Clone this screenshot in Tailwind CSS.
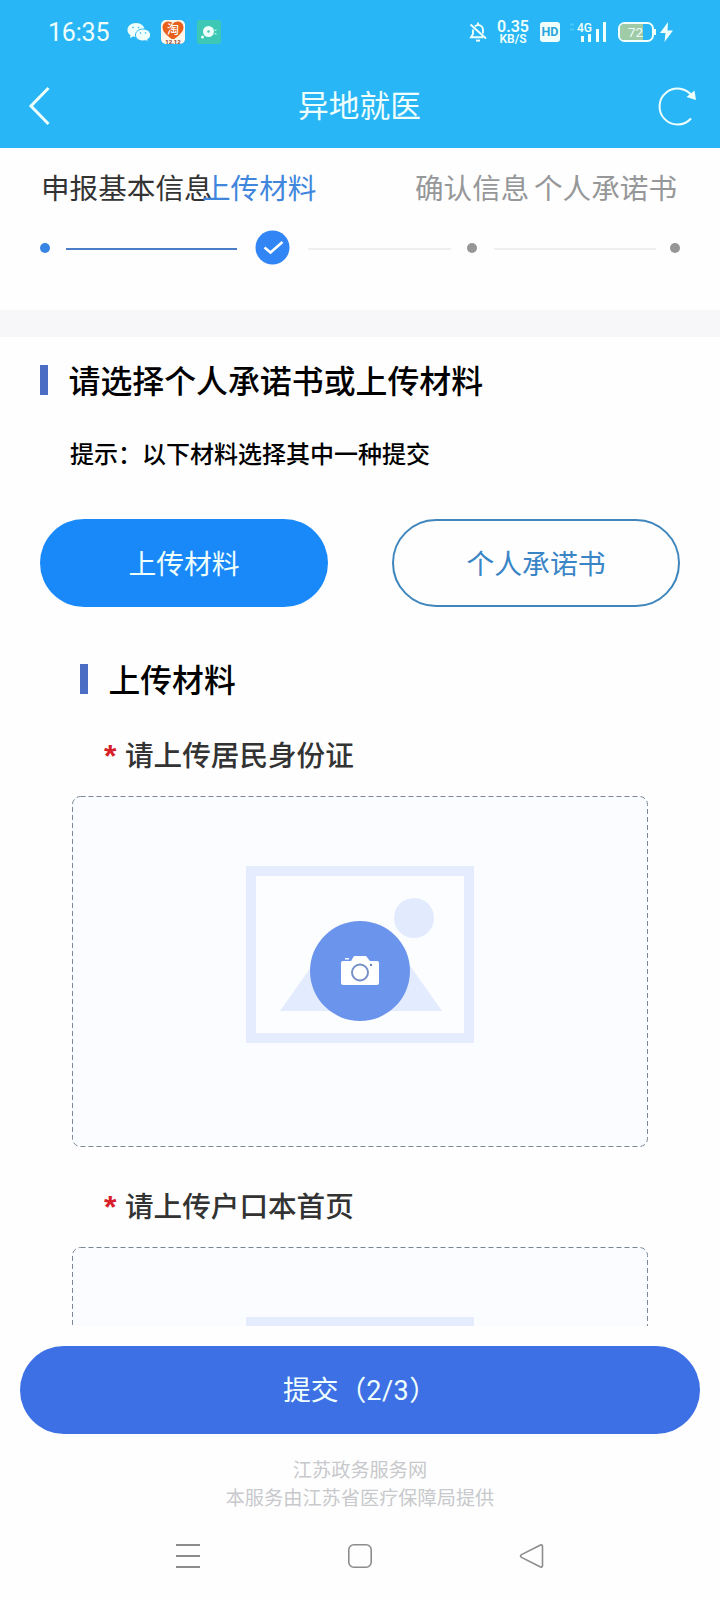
<!DOCTYPE html>
<html lang="zh-CN">
<head>
<meta charset="utf-8">
<title>异地就医</title>
<script src="https://cdn.jsdelivr.net/npm/@tailwindcss/browser@4"></script>
</head>
<body class="bg-white">
<div class="w-[720px] h-[1600px] overflow-hidden flex flex-col bg-[#fefefe] font-['Noto_Sans_CJK_SC',sans-serif]">

  <header class="h-[148px] shrink-0 bg-[#29b6f6] text-[#effffc]">
    <!-- status bar -->
    <div class="h-16 flex items-center pl-[48px] pr-[44px]">
      <span class="w-[79px] text-[25px] leading-none tracking-[-0.2px] whitespace-nowrap font-['Roboto','Noto_Sans_CJK_SC',sans-serif]">16:35</span>
      <svg class="w-6 h-6" viewBox="0 0 24 24">
        <path fill="#effffc" d="M9 3C4 3 .5 6 .5 10c0 2.300 1 4 3 5.200L3 18l3-1.500c1 .3 2 .4 3 .4 5 0 8.500-3 8.500-7S14 3 9 3z"/>
        <path fill="#effffc" stroke="#29b6f6" stroke-width="1" d="M16 9c-4.300 0-7.500 2.600-7.500 6s3.200 6 7.500 6c.8 0 1.700-.1 2.500-.4l2.700 1.400-.6-2.400c1.900-1.100 3-2.700 3-4.600 0-3.400-3.300-6-7.600-6z"/>
        <g fill="#29b6f6"><circle cx="6" cy="7.500" r=".8"/><circle cx="11.500" cy="7.500" r=".8"/><circle cx="13.500" cy="13" r=".8"/><circle cx="18.500" cy="13" r=".8"/></g>
      </svg>
      <svg class="w-6 h-6 ml-[10px]" viewBox="0 0 24 24">
        <rect width="24" height="24" rx="5" fill="#fff6ec"/>
        <path fill="#e8601c" d="M12 20C8 17 1.500 12.500 1.500 7.500 1.500 4 4 1.500 7 1.500c2 0 4 .8 5 2 1-1.200 3-2 5-2 3 0 5.500 2.500 5.500 6C22.500 12.500 16 17 12 20z"/>
        <rect x="4" y="19" width="16" height="5" fill="#fff6ec"/>
        <text x="12" y="14" font-size="12" font-weight="500" text-anchor="middle" fill="#fff" font-family="Noto Sans CJK SC">淘</text>
        <text x="12" y="23.500" font-size="6" font-weight="700" text-anchor="middle" fill="#8c3a2a" font-family="Roboto">12.12</text>
      </svg>
      <svg class="w-6 h-6 ml-[12px]" viewBox="0 0 24 24">
        <rect width="24" height="24" rx="3" fill="#3cc8b4"/>
        <circle cx="11.500" cy="11.500" r="5.500" fill="#effffc"/><circle cx="11.500" cy="11.500" r="1.200" fill="#3cc8b4"/>
        <circle cx="5.500" cy="17" r="1.500" fill="#effffc"/><path d="M18.500 9.500v1.500M18.500 13v1.500" stroke="#a8efe0" stroke-width="2"/>
      </svg>
      <div class="ml-auto flex items-center">
        <svg class="w-[18px] h-5" viewBox="0 0 18 20" fill="none" stroke="#effffc" stroke-width="1.900">
          <path d="M6 4.500C7 3.500 8 3 9 3c3 0 5 2.300 5 5v3.500M4 7.500V12l-2 3.300h12M9 .5V3M1.500 2.500l15.500 14"/><path d="M7 18.600h4" stroke-width="2"/>
        </svg>
        <div class="ml-[10px] w-[32px] flex flex-col items-center font-['Roboto','Noto_Sans_CJK_SC',sans-serif]">
          <span class="text-[16px] leading-[13px] whitespace-nowrap font-semibold">0.35</span>
          <span class="text-[12px] leading-[12px] whitespace-nowrap font-semibold">KB/S</span>
        </div>
        <div class="ml-[11px] w-5 h-5 rounded-[3px] bg-[#effffc] text-[#2aa5dc] text-[12.500px] leading-5 text-center font-bold font-['Roboto',sans-serif]">HD</div>
        <svg class="ml-[10px] w-[38px] h-6" viewBox="0 0 38 24">
          <path d="M0 4.500h4M0 9.500h4" stroke="#45c8f5" stroke-width="2"/>
          <text x="7" y="11.500" font-size="12" fill="#effffc" font-family="Roboto" font-weight="500" textLength="15">4G</text>
          <g fill="#effffc"><rect x="11" y="16" width="3" height="6"/><rect x="18" y="14" width="3" height="8"/><rect x="26" y="9" width="3" height="13"/><rect x="33" y="2" width="3" height="20"/></g>
        </svg>
        <svg class="ml-[9px] mr-px w-[58px] h-6" viewBox="0 0 58 24">
          <rect x="2" y="3" width="34" height="18" rx="5.500" fill="none" stroke="#effffc" stroke-width="2"/>
          <path d="M7 4h19v16H7c-2.500 0-4-1.500-4-4V8c0-2.500 1.500-4 4-4z" fill="#9fcba6"/>
          <path d="M38 9v6" stroke="#effffc" stroke-width="2"/>
          <text x="18.500" y="16.800" font-size="13.500" text-anchor="middle" fill="#effffc" font-family="Roboto">72</text>
          <path d="M51 2l-8 11h5.500l-1 9L56 10.500h-5.500z" fill="#effffc"/>
        </svg>
      </div>
    </div>
    <!-- title bar -->
    <div class="h-[84px] flex items-center justify-between pl-[28px] pr-[22px]">
      <svg class="w-[33px] h-[40px]" viewBox="0 0 33 40" fill="none" stroke="#effffc" stroke-width="3"><path d="M20.500 2L3 20l17.500 18"/></svg>
      <h1 class="text-[30.700px] leading-[44px] pb-[4px]">异地就医</h1>
      <svg class="w-[40px] h-[40px]" viewBox="0 0 40 40"><path d="M34.500 10.500A18 18 0 1 0 33 32.500" fill="none" stroke="#effffc" stroke-width="2"/><path d="M36.500 4.500L38 14l-9.500-3z" fill="#effffc"/></svg>
    </div>
  </header>

  <!-- steps -->
  <section class="h-[162px] shrink-0 pt-[19px]">
    <div class="flex pl-[41px] text-[28.600px] leading-[40px] whitespace-nowrap">
      <span class="w-[161px] text-[#333]">申报基本信息</span>
      <span class="w-[213px] text-[#3f86dc]">上传材料</span>
      <span class="w-[119px] text-[#969799]">确认信息</span>
      <span class="text-[#969799]">个人承诺书</span>
    </div>
    <div class="mt-[23px] h-[35px] flex items-center pl-[40px]">
      <i class="w-[10px] h-[10px] rounded-full bg-[#3784e4]"></i>
      <i class="ml-4 w-[171px] h-[2px] mt-[2px] bg-[#4a7cc8]"></i>
      <svg class="ml-[18px] w-[35px] h-[35px]" viewBox="0 0 35 35"><circle cx="17.500" cy="17.500" r="17" fill="#3185f5"/><path d="M9.500 17.500l6 5 12-10.500" fill="none" stroke="#fff" stroke-width="2.500"/></svg>
      <i class="ml-[18px] w-[143px] h-[2px] mt-[2px] bg-[#efefef]"></i>
      <i class="ml-4 w-[10px] h-[10px] rounded-full bg-[#969696]"></i>
      <i class="ml-[17px] w-[162px] h-[2px] mt-[2px] bg-[#efefef]"></i>
      <i class="ml-[14px] w-[10px] h-[10px] rounded-full bg-[#969696]"></i>
    </div>
  </section>
  <div class="h-[27px] shrink-0 bg-[#f7f7f9]"></div>

  <main class="h-[989px] shrink-0 overflow-hidden">
    <div class="h-[88px] flex items-center pl-10">
      <i class="w-2 h-[30px] mb-[2px] bg-[#4b6ec4]"></i>
      <h2 class="ml-[20.500px] pb-[4px] text-[31.900px] leading-[44px] font-medium text-black">请选择个人承诺书或上传材料</h2>
    </div>
    <p class="h-[58px] pl-[70px] text-[24px] leading-[56px] font-medium text-black">提示：以下材料选择其中一种提交</p>
    <div class="mt-9 flex gap-16 px-10 text-[27.800px]">
      <button class="w-[288px] h-[88px] rounded-full bg-[#1989fa] text-[#effffc] pb-px">上传材料</button>
      <button class="w-[288px] h-[88px] rounded-full border-2 border-[#3f86bd] text-[#3a85c6] pb-px">个人承诺书</button>
    </div>
    <div class="mt-[50px] h-[44px] flex items-center pl-20">
      <i class="w-2 h-[30px] bg-[#4b6ec4]"></i>
      <h2 class="ml-[20.500px] pb-[2px] text-[31.800px] leading-[44px] font-medium text-black">上传材料</h2>
    </div>
    <div class="mt-[33px] h-10 flex items-center pl-[104px] text-[28.600px] leading-10 font-medium text-[#333]">
      <span class="w-[21px] pt-[3px] text-[#d8202a] text-[32px] font-bold font-['Liberation_Sans',sans-serif]">*</span><span>请上传居民身份证</span>
    </div>
    <div class="mt-[22px] ml-[72px] w-[576px] h-[351px]">
      <svg class="w-full h-full" viewBox="0 0 576 351">
        <rect x=".5" y=".5" width="575" height="350" rx="8" fill="#fafcff" stroke="#7b8794" stroke-dasharray="5 3"/>
        <rect x="179" y="75" width="218" height="167" fill="#fcfdff" stroke="#e5ecfe" stroke-width="10"/>
        <circle cx="342" cy="122" r="20" fill="#e2eafe"/>
        <path d="M208 215l43-61h76l43 61z" fill="#e3ebfe"/>
        <circle cx="288" cy="175" r="50" fill="#6b94ec"/>
        <path d="M271 165h8l3-5h12l4 5h7q2 0 2 2v20q0 2-2 2h-34q-2 0-2-2v-20q0-2 2-2zM273 162h4v1.500h-4z" fill="#fff"/>
        <circle cx="288" cy="176.500" r="8" fill="#fff" stroke="#7590c8" stroke-width="2"/><circle cx="299" cy="169" r="1.200" fill="#6b84bd"/>
      </svg>
    </div>
    <div class="mt-[38px] h-10 flex items-center pl-[104px] text-[28.600px] leading-10 font-medium text-[#333]">
      <span class="w-[21px] pt-[3px] text-[#d8202a] text-[32px] font-bold font-['Liberation_Sans',sans-serif]">*</span><span>请上传户口本首页</span>
    </div>
    <div class="mt-[22px] ml-[72px] w-[576px] h-[350px]">
      <svg class="w-full h-full" viewBox="0 0 576 350">
        <rect x=".5" y=".5" width="575" height="349" rx="8" fill="#fafcff" stroke="#7b8794" stroke-dasharray="5 3"/>
        <rect x="179" y="75" width="218" height="167" fill="#fcfdff" stroke="#e5ecfe" stroke-width="10"/>
      </svg>
    </div>
  </main>

  <footer class="flex-1 pt-5">
    <button class="block mx-auto w-[680px] h-[88px] rounded-full bg-[#3d6fe5] text-[#effffc] text-[27.800px]">提交（<span class="text-[27px] tracking-[0.5px] font-['Roboto',sans-serif]">2/3</span>）</button>
    <div class="mt-[21px] text-center text-[19.200px] leading-7 text-[#c8c9cc]">
      <p>江苏政务服务网</p>
      <p>本服务由江苏省医疗保障局提供</p>
    </div>
    <div class="mt-[32px] flex justify-between px-[175px] text-[#8c8c8c]">
      <svg class="w-[26px] h-[26px]" viewBox="0 0 26 26" stroke="currentColor" stroke-width="2"><path d="M1 2h24M1 13h24M1 24h24"/></svg>
      <svg class="w-[26px] h-[26px]" viewBox="0 0 26 26" fill="none" stroke="currentColor" stroke-width="1.600"><rect x="1.800" y="1.800" width="22.400" height="22.400" rx="5"/></svg>
      <svg class="w-[26px] h-[26px]" viewBox="0 0 26 26" fill="none" stroke="currentColor" stroke-width="1.600" stroke-linejoin="round"><path d="M2.500 11.600L21 2.200Q23.500 1.200 23.500 3.500v19Q23.500 24.800 21 23.800L2.500 14.400Q.5 13 2.500 11.600z"/></svg>
    </div>
  </footer>
</div>
</body>
</html>
